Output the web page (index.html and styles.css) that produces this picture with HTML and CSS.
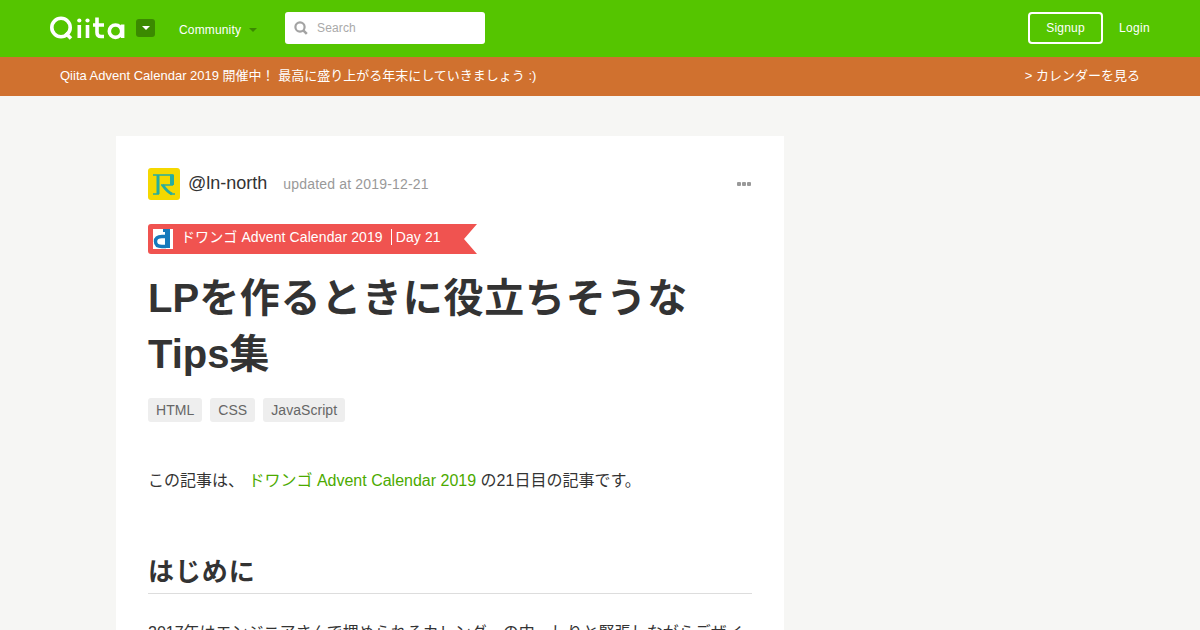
FILE: index.html
```html
<!DOCTYPE html>
<html lang="ja">
<head>
    <meta charset="UTF-8">
    <meta name="viewport" content="width=device-width, initial-scale=1.0">
    <title>LPを作るときに役立ちそうなTips集 - Qiita</title>
    <link rel="stylesheet" href="styles.css">
</head>
<body>
    <header class="header">
        <a class="logo" href="#" aria-label="Qiita">
            <svg width="76" height="24" viewBox="0 0 76 24" fill="none" stroke="#fff" stroke-width="3.6">
                <circle cx="11" cy="11.500" r="9.200"/>
                <path d="M15.500 17l5.500 5.500"/>
                <path d="M29.300 9v13M37.500 9v13M47 1.500V16.500q0 4 4 4h3M43 9h11M72.600 8.500v13.500"/>
                <circle cx="65.500" cy="15.200" r="6.200"/>
                <g fill="#fff" stroke="none">
                    <circle cx="29.300" cy="4.500" r="2.100"/>
                    <circle cx="37.500" cy="4.500" r="2.100"/>
                </g>
            </svg>
        </a>
        <button class="switcher" aria-label="Menu"><span class="caret"></span></button>
        <a class="community" href="#">Community <span class="caret caret-dark"></span></a>
        <div class="search">
            <svg width="14" height="14" viewBox="0 0 14 14" fill="none" stroke="#a3a3a3" stroke-width="2.2">
                <circle cx="6" cy="6" r="4.600"/>
                <path d="M9.300 9.300l3.500 3.500" stroke-width="2.600"/>
            </svg>
            <span>Search</span>
        </div>
        <a class="signup" href="#">Signup</a>
        <a class="login" href="#">Login</a>
    </header>

    <div class="announce">
        <span>Qiita Advent Calendar 2019 開催中！ 最高に盛り上がる年末にしていきましょう :)</span>
        <a href="#">&gt; カレンダーを見る</a>
    </div>

    <main class="article">
        <div class="author">
            <svg class="avatar" width="32" height="32" viewBox="0 0 32 32">
                <rect width="32" height="32" fill="#f5d800"/>
                <g fill="none" stroke="#27ada0">
                    <path d="M5 7h20M5 26h6" stroke-width="1.500"/>
                    <path d="M10 7v19" stroke-width="3"/>
                    <path d="M24 6.500v10.500" stroke-width="4"/>
                    <path d="M13 17h12" stroke-width="1.500"/>
                    <path d="M14.500 17q5 7 9.500 9" stroke-width="3"/>
                    <path d="M22 26h5" stroke-width="1.500"/>
                </g>
            </svg>
            <a class="name" href="#">@ln-north</a>
            <span class="date">updated at 2019-12-21</span>
            <span class="more"><i></i><i></i><i></i></span>
        </div>

        <a class="ribbon" href="#">
            <svg width="20" height="20" viewBox="0 0 20 20">
                <rect width="20" height="20" fill="#fff"/>
                <path d="M10 0h7v19h-5V3h-2z" fill="#167abc"/>
                <path d="M13 7.500H9q-6.500 0-6.500 5T9 17.500h4" fill="none" stroke="#167abc" stroke-width="3.400"/>
            </svg>
            <span>ドワンゴ Advent Calendar 2019</span>
            <span class="day">Day 21</span>
        </a>

        <h1>LP<span>を作るときに役立ちそうな</span>Tips集</h1>

        <div class="tags">
            <a href="#">HTML</a>
            <a href="#">CSS</a>
            <a href="#">JavaScript</a>
        </div>

        <section class="body">
            <p>この記事は、 <a href="#">ドワンゴ Advent Calendar 2019</a> の21日目の記事です。</p>
            <h2>はじめに</h2>
            <p>2017年はエンジニアさんで埋められるカレンダーの中、しりと緊張しながらデザイ</p>
        </section>
    </main>
</body>
</html>
```
FILE: styles.css
```css
* {
    box-sizing: border-box;
}

body {
    margin: 0;
    height: 630px;
    overflow: hidden;
    background-color: #f6f6f4;
    color: #333;
    font-family: "Liberation Sans", "Noto Sans CJK JP", sans-serif;
}

a {
    color: inherit;
    text-decoration: none;
}

.header {
    display: flex;
    align-items: center;
    height: 57px;
    padding: 0 50px 1px;
    background-color: #55c500;
    color: #fff;
    font-size: 12px;
}

.logo {
    display: flex;
}

.switcher {
    display: flex;
    align-items: center;
    justify-content: center;
    width: 19px;
    height: 18px;
    margin-left: 10px;
    padding: 0;
    border: 0;
    border-radius: 3px;
    background-color: #3b8a00;
}

.caret {
    border: 4px solid transparent;
    border-top-color: #fff;
    border-bottom: 0;
}

.caret-dark {
    margin-left: 8px;
    border-top-color: #3b8a00;
}

.community {
    display: flex;
    align-items: center;
    width: 78px;
    margin: 4px 0 0 24px;
    letter-spacing: 0.15px;
}

.search {
    display: flex;
    align-items: center;
    gap: 9px;
    width: 200px;
    height: 32px;
    margin-left: 28px;
    padding-left: 9px;
    border-radius: 3px;
    background-color: #fff;
    color: #a9a9a9;
    letter-spacing: 0.15px;
}

.signup {
    width: 75px;
    height: 32px;
    margin-left: auto;
    border: 2px solid #fff;
    border-radius: 4px;
    line-height: 28px;
    text-align: center;
    letter-spacing: 0.2px;
}

.login {
    width: 31px;
    margin-left: 16px;
    letter-spacing: 0.35px;
}

.announce {
    display: flex;
    justify-content: space-between;
    height: 39px;
    padding: 0 60px;
    background-color: #d0712f;
    color: #fff;
    font-size: 13px;
    line-height: 38px;
}

.article {
    width: 668px;
    margin: 40px 0 0 116px;
    padding: 32px;
    background-color: #fff;
}

.author {
    display: flex;
    align-items: center;
    height: 32px;
}

.avatar {
    border-radius: 3px;
}

.name {
    margin: -2px 16px 0 8px;
    font-size: 18px;
}

.date {
    color: #999;
    font-size: 14px;
    letter-spacing: 0.18px;
}

.more {
    display: flex;
    gap: 1px;
    margin: 0 1px 0 auto;
}

.more i {
    width: 4px;
    height: 4px;
    border-radius: 1px;
    background-color: #999;
}

.ribbon {
    display: flex;
    align-items: center;
    width: 329px;
    height: 30px;
    margin-top: 24px;
    padding-left: 5px;
    border-radius: 3px 0 0 3px;
    background-color: #f05350;
    clip-path: polygon(0 0, 100% 0, calc(100% - 13px) 50%, 100% 100%, 0 100%);
    color: #fff;
    font-size: 14px;
    line-height: 16px;
    letter-spacing: 0.1px;
}

.ribbon span {
    margin: -4px 0 0 8px;
}

.ribbon .day {
    padding-left: 4px;
    border-left: 1px solid #fff;
}

h1 {
    margin: 16px 0 0;
    font-size: 40px;
    line-height: 56px;
}

h1 span {
    letter-spacing: 0.75px;
}

.tags {
    display: flex;
    gap: 8px;
    margin-top: 16px;
}

.tags a {
    height: 24px;
    padding: 0 8px;
    border-radius: 3px;
    background-color: #eee;
    color: #666;
    font-size: 14px;
    line-height: 24px;
    letter-spacing: 0.05px;
}

.body {
    margin-top: 43px;
    font-size: 16px;
    line-height: 32px;
}

.body p {
    margin: 0;
    white-space: nowrap;
}

.body p a {
    color: #4caa00;
}

h2 {
    margin: 55px 0 23px;
    border-bottom: 1px solid #ddd;
    font-size: 26px;
    line-height: 41px;
    letter-spacing: 0.9px;
}
```
